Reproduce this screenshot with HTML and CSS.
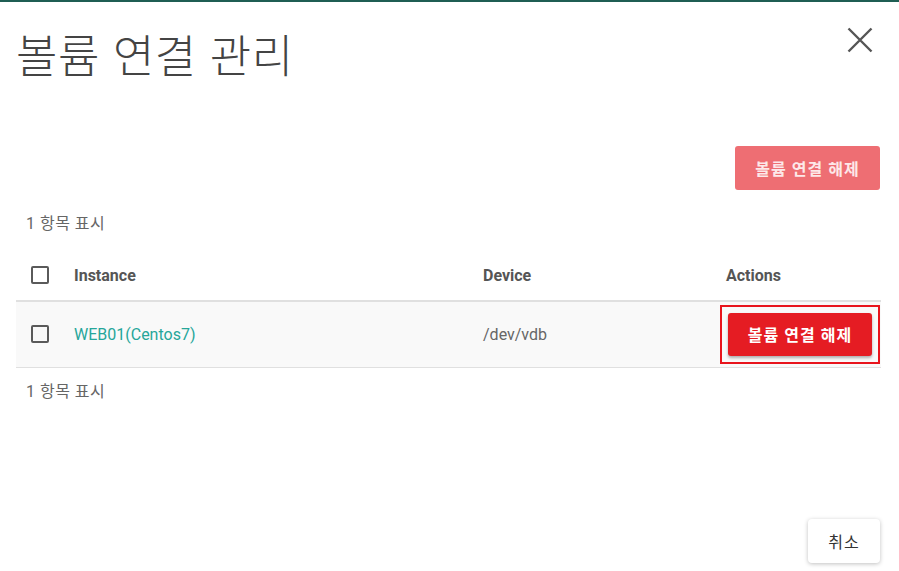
FILE: index.html
```html
<!DOCTYPE html>
<html lang="ko">
<head>
<meta charset="utf-8">
<link rel="stylesheet" href="styles.css">
</head>
<body>
<div class="topline"></div>
<div class="modal">
  <div class="head">
    <h1 class="title">볼륨 연결 관리</h1>
    <button class="close" aria-label="close">
      <svg width="26" height="26" viewBox="0 0 26 26"><path d="M1.5 1.5L24.5 24.5M24.5 1.5L1.5 24.5" stroke="#555" stroke-width="2.4" fill="none"/></svg>
    </button>
  </div>
  <div class="toolbar">
    <button class="btn btn-disabled">볼륨 연결 해제</button>
  </div>
  <div class="count">1 항목 표시</div>
  <table class="grid">
    <thead>
      <tr>
        <th class="c-check"><span class="cb"></span></th>
        <th class="c-inst">Instance</th>
        <th class="c-dev">Device</th>
        <th class="c-act">Actions</th>
      </tr>
    </thead>
    <tbody>
      <tr>
        <td class="c-check"><span class="cb"></span></td>
        <td class="c-inst"><a class="link" href="#">WEB01(Centos7)</a></td>
        <td class="c-dev">/dev/vdb</td>
        <td class="c-act"><span class="hl"><button class="btn btn-red">볼륨 연결 해제</button></span></td>
      </tr>
    </tbody>
  </table>
  <div class="count count2">1 항목 표시</div>
  <div class="footer">
    <button class="btn btn-white">취소</button>
  </div>
</div>
</body>
</html>
```

FILE: styles.css
```css
* { box-sizing: border-box; }
html, body { margin: 0; padding: 0; background: #fff; }
body {
  width: 899px;
  height: 571px;
  overflow: hidden;
  font-family: Roboto, "Noto Sans CJK KR", sans-serif;
  color: #555;
}
.topline {
  height: 2px;
  background: #1f5e53;
}
.modal {
  padding: 0 18px 0 16px;
}
.head {
  display: flex;
  justify-content: space-between;
  align-items: flex-start;
  height: 140px;
}
.title {
  margin: 22px 0 0 0;
  font-family: "Noto Sans CJK KR", sans-serif;
  font-weight: 300;
  font-size: 45px;
  line-height: 60px;
  color: #444;
  letter-spacing: 0.5px;
}
.close {
  margin: 25px 8px 0 0;
  padding: 0;
  border: 0;
  background: none;
  width: 26px;
  height: 26px;
  display: flex;
  align-items: center;
  justify-content: center;
}
.toolbar {
  display: flex;
  justify-content: flex-end;
  margin-top: 4px;
}
.btn {
  font-family: Roboto, "Noto Sans CJK KR", sans-serif;
  font-size: 16px;
  font-weight: 700;
  letter-spacing: 1px;
  border: 0;
  border-radius: 3px;
  padding: 0;
  height: 44px;
  cursor: pointer;
}
.btn-disabled {
  background: #ee6e73;
  color: #fde8e9;
  width: 145px;
  margin-right: 1px;
}
.count {
  font-size: 16px;
  color: #666;
  margin: 23px 0 0 10px;
  line-height: 22px;
  letter-spacing: 0.5px;
  font-family: Roboto, "Noto Sans CJK KR", sans-serif;
}
.grid {
  width: 865px;
  border-collapse: collapse;
  margin-top: 15px;
}
.grid th {
  text-align: left;
  font-size: 16px;
  font-weight: 700;
  color: #555;
  height: 51px;
  border-bottom: 2px solid #e0e0e0;
  padding: 0;
}
.grid td {
  height: 66px;
  background: #f9f9f9;
  border-bottom: 1px solid #e0e0e0;
  padding: 0;
  font-size: 16px;
  color: #666;
}
.c-check { width: 58px; padding-left: 15px !important; }
.c-inst { width: 409px; }
.c-dev { width: 243px; }
.cb {
  display: block;
  width: 18px;
  height: 18px;
  border: 2px solid #5a5a5a;
  border-radius: 2px;
}
.link {
  color: #26a69a;
  text-decoration: none;
  font-size: 16px;
}
.hl {
  display: inline-block;
  margin-left: -6px;
  padding: 6px;
  border: 2px solid #e8141c;
}
.btn-red {
  display: block;
  background: #e51c23;
  color: #fff;
  width: 144px;
  height: 43px;
  box-shadow: 0 2px 3px rgba(0,0,0,0.3);
}
.count2 { margin-top: 13px; }
.footer {
  display: flex;
  justify-content: flex-end;
  margin-top: 116px;
}
.btn-white {
  background: #fff;
  color: #333;
  font-weight: 400;
  width: 72px;
  height: 44px;
  padding: 0;
  border-radius: 4px;
  box-shadow: 0 1px 4px rgba(0,0,0,0.25);
  margin-right: 1px;
}
```
